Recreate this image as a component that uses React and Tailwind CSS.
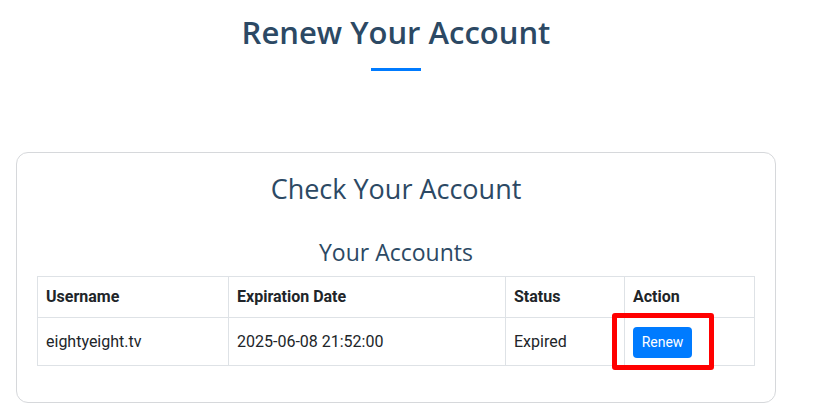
export default function App() {
  const rows = [{ username: 'eightyeight.tv', expires: '2025-06-08 21:52:00', status: 'Expired' }]

  return (
    <div className="min-h-[420px] bg-white" style={{ fontFamily: '"Open Sans", "Noto Sans", sans-serif' }}>
      <div className="w-[792px] px-4">
        {/* Page title */}
        <div className="flex flex-col items-center pt-[12px]">
          <h1 className="text-[31px] font-semibold leading-[40px] text-[#2c4964]">Renew Your Account</h1>
          <div className="mt-[16px] h-[3px] w-[50px] bg-[#007bff]" />
        </div>

        {/* Card */}
        <div className="mt-[81px] rounded-[12px] border border-[#d6d8db] px-[20px] pb-[36px] pt-[18px]">
          <h2 className="text-center text-[27px] font-normal leading-[36px] text-[#2c4964]">Check Your Account</h2>
          <h3 className="mt-[30px] text-center text-[23px] font-normal leading-[30px] text-[#2c4964]">Your Accounts</h3>

          <table
            className="mt-[9px] w-full border-collapse text-[16px] text-[#212529]"
            style={{ fontFamily: 'Roboto, "Liberation Sans", sans-serif' }}
          >
            <thead>
              <tr className="h-[41px]">
                <th className="w-[191px] border border-[#dee2e6] px-[8px] text-left font-bold">Username</th>
                <th className="w-[277px] border border-[#dee2e6] px-[8px] text-left font-bold">Expiration Date</th>
                <th className="w-[119px] border border-[#dee2e6] px-[8px] text-left font-bold">Status</th>
                <th className="border border-[#dee2e6] px-[8px] text-left font-bold">Action</th>
              </tr>
            </thead>
            <tbody>
              {rows.map((r) => (
                <tr key={r.username} className="h-[48px]">
                  <td className="border border-[#dee2e6] px-[8px]">{r.username}</td>
                  <td className="border border-[#dee2e6] px-[8px]">{r.expires}</td>
                  <td className="border border-[#dee2e6] px-[8px]">{r.status}</td>
                  <td className="relative border border-[#dee2e6] px-[8px] pt-[2px]">
                    <button className="h-[31px] w-[59px] rounded-[4px] bg-[#007bff] text-[14px] text-white">Renew</button>
                    {/* highlight annotation */}
                    <div className="pointer-events-none absolute left-[-13px] top-[-5px] h-[57px] w-[102px] rounded-[3px] border-[5px] border-[#ff0000]" />
                  </td>
                </tr>
              ))}
            </tbody>
          </table>
        </div>
      </div>
    </div>
  )
}
